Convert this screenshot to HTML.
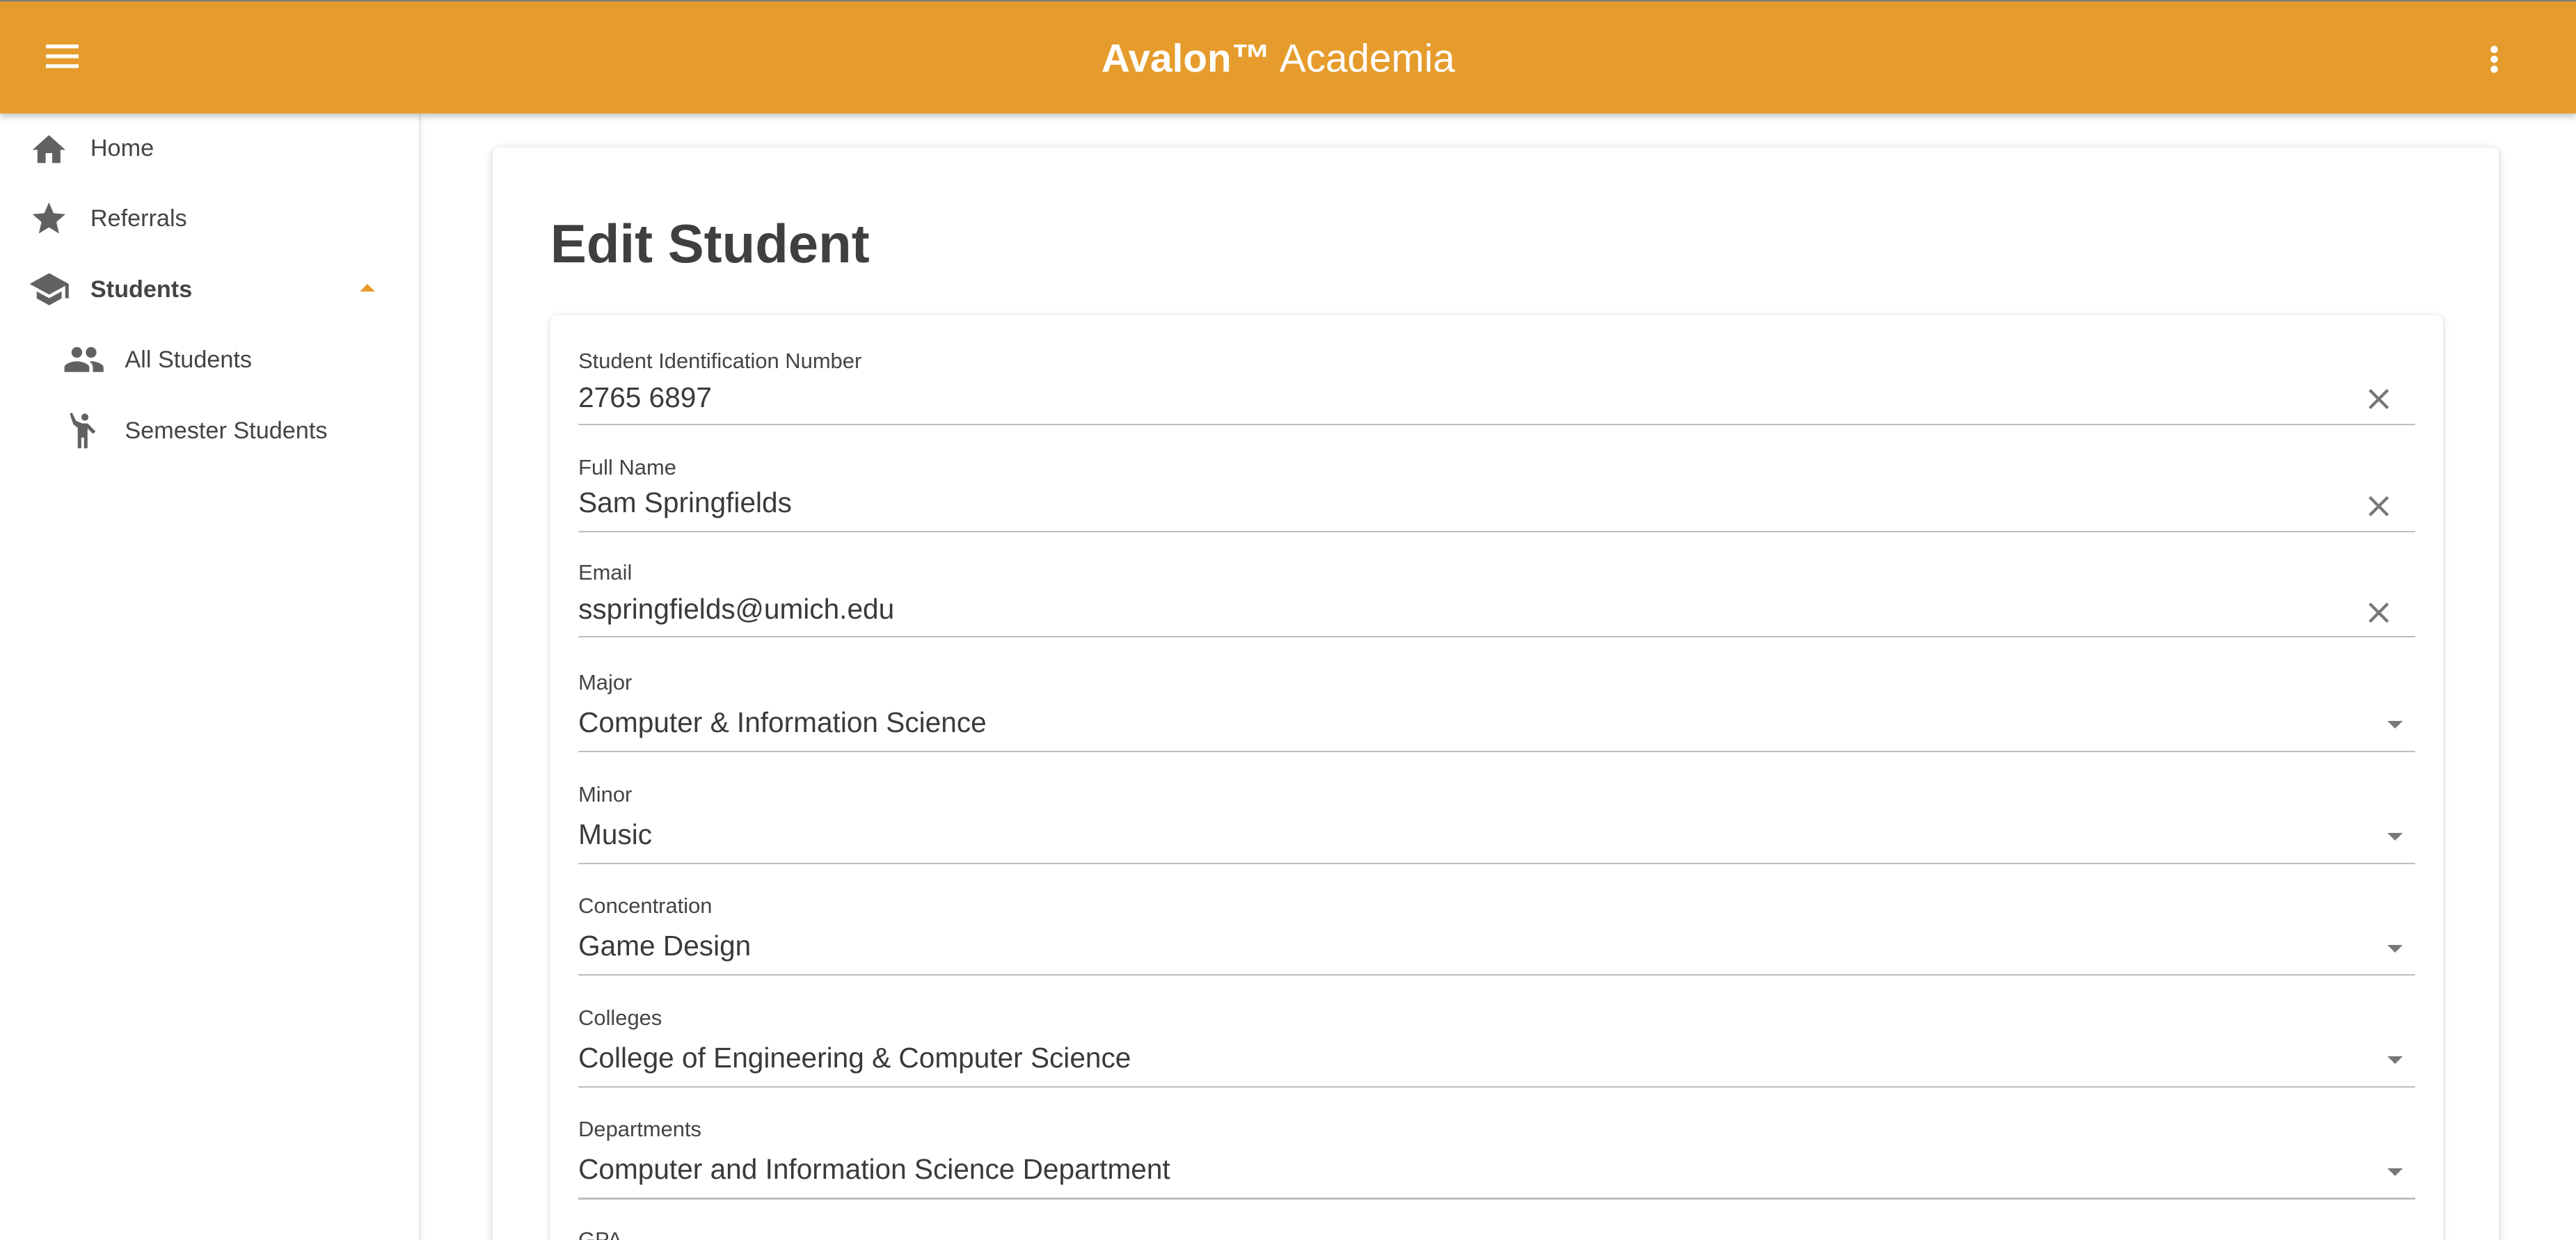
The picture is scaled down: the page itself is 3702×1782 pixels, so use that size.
<!DOCTYPE html>
<html><head><meta charset="utf-8">
<style>
html,body{margin:0;padding:0;background:#fff;overflow:hidden;}
body{width:3702px;height:1782px;}
#w{zoom:2.3610;width:1568px;height:755px;position:relative;overflow:hidden;font-family:"Liberation Sans",sans-serif;color:#424242;background:#fff;}
.top{position:absolute;left:0;top:0;width:1568px;height:1px;background:#7a7a7a;z-index:5}
.hdr{position:absolute;left:0;top:1px;width:1568px;height:68px;background:#E69C2D;box-shadow:0 2px 4px rgba(0,0,0,.25);z-index:4}
.hdr .t{position:absolute;left:-12px;right:0;top:21px;text-align:center;color:#fff;font-size:24px;}
.side{position:absolute;left:0;top:69px;width:255px;height:700px;border-right:1px solid #e6e6e6;box-shadow:1px 0 3px rgba(0,0,0,.06)}
.it{position:absolute;font-size:14.5px;color:#444}
.ic{position:absolute}
.card{position:absolute;left:300px;top:90px;width:1221px;height:700px;background:#fff;border-radius:4px;box-shadow:0 1px 5px rgba(0,0,0,.2)}
.inner{position:absolute;left:335px;top:192px;width:1152px;height:600px;background:#fff;border-radius:4px;box-shadow:0 1px 4px rgba(0,0,0,.18)}
h1{position:absolute;left:335px;top:129px;margin:0;font-size:33px;font-weight:bold;color:#3f3f3f}
.lb{position:absolute;left:352px;font-size:13.1px;color:#444}
.v{position:absolute;left:352px;font-size:17.2px;color:#3a3a3a}
.ln{position:absolute;left:352px;width:1118px;height:1px;background:#bdbdbd}
.x{position:absolute;left:1441px}
.ar{position:absolute;left:1453px;width:0;height:0;border-left:5px solid transparent;border-right:5px solid transparent;border-top:5px solid #777}
</style></head><body><div id="w">
<div class="top"></div>
<div class="hdr">
 <svg style="position:absolute;left:28px;top:26px" width="20" height="16"><rect x="0" y="0" width="20" height="2.3" fill="#fff"/><rect x="0" y="6" width="20" height="2.3" fill="#fff"/><rect x="0" y="12" width="20" height="2.3" fill="#fff"/></svg>
 <div class="t"><b>Avalon™</b> Academia</div>
 <svg style="position:absolute;left:1514px;top:26px" width="8" height="18"><circle cx="4" cy="3" r="2.2" fill="#fff"/><circle cx="4" cy="9" r="2.2" fill="#fff"/><circle cx="4" cy="15" r="2.2" fill="#fff"/></svg>
</div>
<div class="side">
 <svg class="ic" style="left:18px;top:10px" width="24" height="24" viewBox="0 0 24 24"><path d="M10 20v-6h4v6h5v-8h3L12 3 2 12h3v8z" fill="#616161"/></svg>
 <div class="it" style="left:55px;top:13px">Home</div>
 <svg class="ic" style="left:18px;top:52px" width="24" height="24" viewBox="0 0 24 24"><path d="M12 17.27L18.18 21l-1.64-7.03L22 9.24l-7.19-.61L12 2 9.19 8.63 2 9.24l5.46 4.73L5.82 21z" fill="#616161"/></svg>
 <div class="it" style="left:55px;top:56px">Referrals</div>
 <svg class="ic" style="left:17px;top:94px" width="26" height="26" viewBox="0 0 24 24"><path d="M5 13.18v4L12 21l7-3.82v-4L12 17l-7-3.82zM12 3L1 9l11 6 9-4.91V17h2V9L12 3z" fill="#616161"/></svg>
 <div class="it" style="left:55px;top:99px;font-weight:bold">Students</div>
 <div style="position:absolute;left:219px;top:104px;width:0;height:0;border-left:5px solid transparent;border-right:5px solid transparent;border-bottom:5px solid #E69C2D"></div>
 <svg class="ic" style="left:38px;top:137px" width="26" height="26" viewBox="0 0 24 24"><path d="M16 11c1.66 0 2.99-1.34 2.99-3S17.66 5 16 5c-1.66 0-3 1.340-3 3s1.34 3 3 3zm-8 0c1.66 0 2.99-1.34 2.99-3S9.66 5 8 5C6.34 5 5 6.34 5 8s1.34 3 3 3zm0 2c-2.330 0-7 1.17-7 3.5V19h14v-2.5c0-2.33-4.67-3.5-7-3.5zm8 0c-.29 0-.62.02-.97.05 1.16.84 1.97 1.97 1.970 3.45V19h6v-2.5c0-2.33-4.67-3.5-7-3.5z" fill="#616161"/></svg>
 <div class="it" style="left:76px;top:142px">All Students</div>
 <svg class="ic" style="left:38px;top:180px" width="26" height="26" viewBox="0 0 24 24"><circle cx="12.5" cy="4.5" r="2" fill="#616161"/><path d="M4 2.5l1.3-.5 2.2 4.5 3.5 1.5h3l4.5 4.5-1.4 1.4-3.1-3.1V22h-2v-6h-1.5v6h-2V10.5L6 8.5z" fill="#616161"/></svg>
 <div class="it" style="left:76px;top:185px">Semester Students</div>
</div>
<div class="card"></div>
<h1>Edit Student</h1>
<div class="inner"></div>

<div class="lb" style="top:212px">Student Identification Number</div>
<div class="v" style="top:232px">2765 6897</div>
<svg class="x" style="top:236px" width="14" height="14"><path d="M1.5 1.5L12.5 12.5M12.5 1.5L1.5 12.5" stroke="#777" stroke-width="1.8"/></svg>
<div class="ln" style="top:258px"></div>

<div class="lb" style="top:277px">Full Name</div>
<div class="v" style="top:296px">Sam Springfields</div>
<svg class="x" style="top:301px" width="14" height="14"><path d="M1.5 1.5L12.5 12.5M12.5 1.5L1.5 12.5" stroke="#777" stroke-width="1.8"/></svg>
<div class="ln" style="top:323px"></div>

<div class="lb" style="top:341px">Email</div>
<div class="v" style="top:361px">sspringfields@umich.edu</div>
<svg class="x" style="top:366px" width="14" height="14"><path d="M1.5 1.5L12.5 12.5M12.5 1.5L1.5 12.5" stroke="#777" stroke-width="1.8"/></svg>
<div class="ln" style="top:387px"></div>

<div class="lb" style="top:408px">Major</div>
<div class="v" style="top:430px">Computer &amp; Information Science</div>
<div class="ar" style="top:439px"></div>
<div class="ln" style="top:457px"></div>

<div class="lb" style="top:476px">Minor</div>
<div class="v" style="top:498px">Music</div>
<div class="ar" style="top:507px"></div>
<div class="ln" style="top:525px"></div>

<div class="lb" style="top:544px">Concentration</div>
<div class="v" style="top:566px">Game Design</div>
<div class="ar" style="top:575px"></div>
<div class="ln" style="top:593px"></div>

<div class="lb" style="top:612px">Colleges</div>
<div class="v" style="top:634px">College of Engineering &amp; Computer Science</div>
<div class="ar" style="top:643px"></div>
<div class="ln" style="top:661px"></div>

<div class="lb" style="top:680px">Departments</div>
<div class="v" style="top:702px">Computer and Information Science Department</div>
<div class="ar" style="top:711px"></div>
<div class="ln" style="top:729px"></div>

<div class="lb" style="top:747px">GPA</div>
</div></body></html>
